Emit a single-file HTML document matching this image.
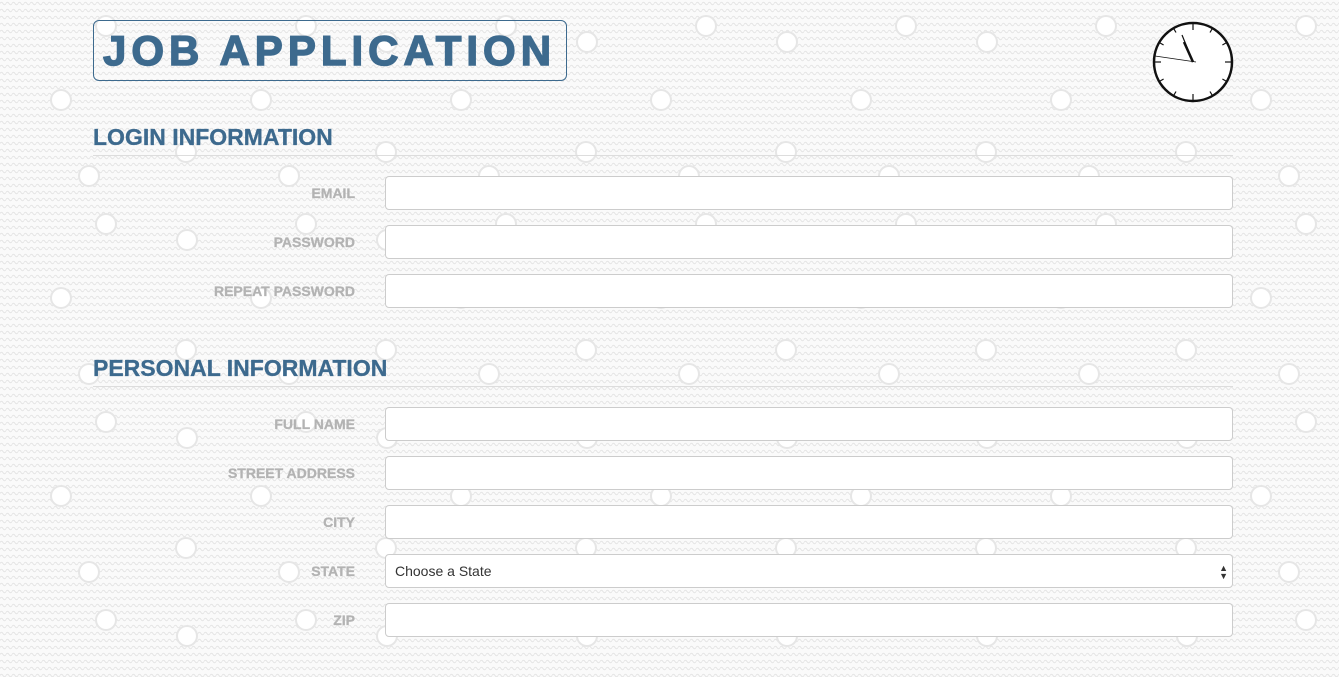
<!DOCTYPE html>
<html><head><meta charset="utf-8"><style>
html,body{margin:0;padding:0;width:1339px;height:677px;overflow:hidden;background:#fafafa;font-family:"Liberation Sans",Arial,sans-serif}
#bg{position:absolute;left:0;top:0}
.title{position:absolute;left:93px;top:20px;width:472px;height:59px;border:1px solid #3d6a8e;border-radius:6px}
.title span{position:absolute;left:9px;top:6px;font-size:42px;font-weight:900;color:#3d6a8e;letter-spacing:5px;white-space:nowrap;-webkit-text-stroke:1.4px #3d6a8e}
h2{position:absolute;left:93px;margin:0;font-size:23px;font-weight:bold;color:#3d6a8e;width:1140px;border-bottom:1px solid #ddd;padding-bottom:4px;-webkit-text-stroke:0.3px #3d6a8e}
.lbl{position:absolute;width:355px;left:0;text-align:right;font-size:14px;font-weight:bold;color:#b3b3b3;-webkit-text-stroke:0.3px #b3b3b3}
.inp{position:absolute;left:385px;width:846px;height:32px;border:1px solid #ccc;border-radius:4px;background:#fff;box-sizing:content-box}
.sel{font-size:14px;color:#333;line-height:32px;padding-left:0}
.sel span{position:absolute;left:9px}
</style></head><body>
<svg id="bg" width="1339" height="677">
<defs>
<pattern id="w" width="6" height="7" patternUnits="userSpaceOnUse">
<path d="M0 3.5 Q1.5 1 3 3.5 T6 3.5" fill="none" stroke="#e4e4e4" stroke-width="1"/>
</pattern>
<pattern id="c" width="200" height="198" patternUnits="userSpaceOnUse" x="0" y="0">
<g fill="#fff" stroke="#e6e6e6" stroke-width="2">
<circle cx="61" cy="100" r="10"/><circle cx="187" cy="42" r="10"/><circle cx="106" cy="26" r="10"/><circle cx="186" cy="152" r="10"/><circle cx="89" cy="176" r="10"/>
</g>
</pattern>
</defs>
<rect width="1339" height="677" fill="url(#w)"/>
<rect width="1339" height="677" fill="url(#c)"/>
</svg>
<div class="title"><span>JOB APPLICATION</span></div>
<svg style="position:absolute;left:1152px;top:21px" width="82" height="82" viewBox="0 0 82 82">
<circle cx="41" cy="41" r="39" fill="#fff" stroke="#111" stroke-width="2.5"/>
<g stroke="#111" stroke-width="1.2">
<line x1="41" y1="3" x2="41" y2="9"/><line x1="41" y1="73" x2="41" y2="79"/><line x1="3" y1="41" x2="9" y2="41"/><line x1="73" y1="41" x2="79" y2="41"/>
<line x1="60" y1="8.1" x2="58" y2="11.5"/><line x1="73.9" y1="22" x2="70.4" y2="24"/><line x1="73.9" y1="60" x2="70.4" y2="58"/><line x1="60" y1="73.9" x2="58" y2="70.5"/>
<line x1="22" y1="73.9" x2="24" y2="70.5"/><line x1="8.1" y1="60" x2="11.6" y2="58"/><line x1="8.1" y1="22" x2="11.6" y2="24"/><line x1="22" y1="8.1" x2="24" y2="11.5"/>
</g>
<line x1="41" y1="41" x2="32" y2="21" stroke="#111" stroke-width="2.5"/>
<line x1="41" y1="41" x2="30" y2="14" stroke="#111" stroke-width="1.2"/>
<line x1="44" y1="41" x2="3" y2="35" stroke="#111" stroke-width="0.8"/>
</svg>
<h2 style="top:124px">LOGIN INFORMATION</h2>
<div class="lbl" style="top:185px">EMAIL</div><div class="inp" style="top:176px"></div>
<div class="lbl" style="top:234px">PASSWORD</div><div class="inp" style="top:225px"></div>
<div class="lbl" style="top:283px">REPEAT PASSWORD</div><div class="inp" style="top:274px"></div>
<h2 style="top:355px">PERSONAL INFORMATION</h2>
<div class="lbl" style="top:416px">FULL NAME</div><div class="inp" style="top:407px"></div>
<div class="lbl" style="top:465px">STREET ADDRESS</div><div class="inp" style="top:456px"></div>
<div class="lbl" style="top:514px">CITY</div><div class="inp" style="top:505px"></div>
<div class="lbl" style="top:563px">STATE</div><div class="inp sel" style="top:554px"><span>Choose a State</span><span style="left:auto;right:4px;font-size:9px;line-height:8px;top:9px">▲<br>▼</span></div>
<div class="lbl" style="top:612px">ZIP</div><div class="inp" style="top:603px"></div>
</body></html>
